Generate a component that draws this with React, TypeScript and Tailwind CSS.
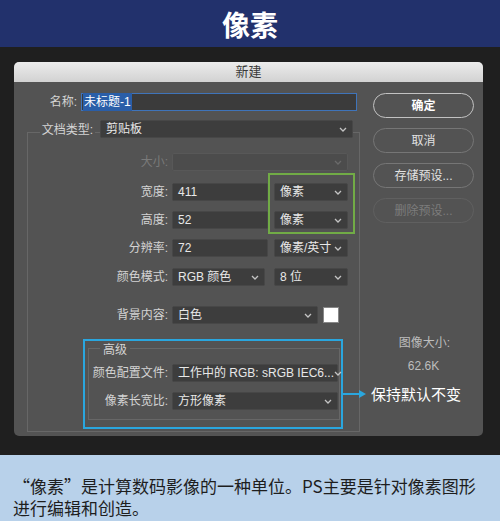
const Chevron = ({ dim = false }: { dim?: boolean }) => (
  <svg width="8" height="5" viewBox="0 0 8 5" className="shrink-0">
    <path d="M1 1l3 3 3-3" fill="none" stroke={dim ? '#6a6a6a' : '#c4c4c4'} strokeWidth="1.3" />
  </svg>
);

type FieldProps = {
  text?: string;
  width: string;
  dim?: boolean;
  chevron?: boolean;
};

const Field = ({ text = '', width, dim = false, chevron = true }: FieldProps) => (
  <div
    className={`flex h-[18px] shrink-0 items-center justify-between rounded-[2px] border px-[5px] text-[12px] ${width} ${
      dim ? 'border-[#585858] bg-[#4c4c4c] text-[#777]' : 'border-[#474747] bg-[#3d3d3d] text-[#e8e8e8]'
    }`}
  >
    <span className="whitespace-nowrap">{text}</span>
    {chevron && <Chevron dim={dim} />}
  </div>
);

const Label = ({ children, width, dim = false }: { children: string; width: string; dim?: boolean }) => (
  <span
    className={`shrink-0 pr-[2px] text-right text-[12px] whitespace-nowrap ${width} ${
      dim ? 'text-[#7a7a7a]' : 'text-[#d4d4d4]'
    }`}
  >
    {children}
  </span>
);

const Pill = ({ children, tone }: { children: string; tone: 'main' | 'normal' | 'off' }) => {
  const look = {
    main: 'border-[#c2c2c2] text-white font-bold',
    normal: 'border-[#767676] text-[#e2e2e2]',
    off: 'border-[#606060] text-[#7c7c7c]',
  }[tone];
  return (
    <div
      className={`flex h-[25px] w-[101px] items-center justify-center rounded-full border-[1.5px] text-[12px] ${look}`}
    >
      {children}
    </div>
  );
};

export default function App() {
  return (
    <div className="h-[521px] w-[500px] font-['Liberation_Sans','Noto_Sans_CJK_SC',sans-serif]">
      <div className="flex h-[47px] items-center justify-center bg-[#22316c]">
        <h1 className="font-['Noto_Sans_CJK_SC',sans-serif] text-[28px] font-bold text-white">像素</h1>
      </div>

      <div className="h-[408px] bg-[#1f1f1f] pt-[15px] pl-[14px]">
        <div className="h-[374px] w-[469px] overflow-hidden rounded-[5px] bg-[#535353]">
          <div className="flex h-[20px] items-center justify-center bg-gradient-to-b from-[#ececec] to-[#d2d2d2] text-[13px] text-[#3a3a3a]">
            新建
          </div>

          <div className="flex">
            {/* form */}
            <div className="w-[351px] shrink-0 pt-[11px]">
              <div className="flex items-center">
                <Label width="w-[65px]">名称:</Label>
                <div className="ml-[2px] flex h-[18px] w-[276px] items-center border-[1.5px] border-[#3f74ba] bg-[#3b3b3b] px-[1px] text-[12px]">
                  <span className="bg-[#2a5ea8] px-[1px] text-white">未标题-1</span>
                </div>
              </div>

              <div className="relative z-10 mt-[6px] flex items-center">
                <div className="w-[81px] shrink-0 text-right">
                  <span className="bg-[#535353] px-[2px] text-[12px] text-[#d4d4d4]">文档类型:</span>
                </div>
                <div className="ml-[5px]">
                  <Field text="剪贴板" width="w-[253px]" />
                </div>
              </div>

              <div className="mt-[-9px] ml-[13px] h-[300px] w-[333px] border border-[#676767] pt-[20px]">
                <div className="flex items-center">
                  <Label width="w-[142px]" dim>
                    大小:
                  </Label>
                  <div className="ml-[2px]">
                    <Field width="w-[176px]" dim />
                  </div>
                </div>

                <div className="relative">
                  <div className="mt-[12px] flex items-center">
                    <Label width="w-[142px]">宽度:</Label>
                    <div className="ml-[2px] flex gap-[6px]">
                      <Field text="411" width="w-[96px]" chevron={false} />
                      <Field text="像素" width="w-[74px]" />
                    </div>
                  </div>
                  <div className="mt-[10px] flex items-center">
                    <Label width="w-[142px]">高度:</Label>
                    <div className="ml-[2px] flex gap-[6px]">
                      <Field text="52" width="w-[96px]" chevron={false} />
                      <Field text="像素" width="w-[74px]" />
                    </div>
                  </div>
                  <div className="absolute top-[-10px] left-[240px] h-[61px] w-[87px] border-2 border-[#71ab46]" />
                </div>

                <div className="mt-[10px] flex items-center">
                  <Label width="w-[142px]">分辨率:</Label>
                  <div className="ml-[2px] flex gap-[6px]">
                    <Field text="72" width="w-[96px]" chevron={false} />
                    <Field text="像素/英寸" width="w-[74px]" />
                  </div>
                </div>

                <div className="mt-[11px] flex items-center">
                  <Label width="w-[142px]">颜色模式:</Label>
                  <div className="ml-[2px] flex gap-[9px]">
                    <Field text="RGB 颜色" width="w-[93px]" />
                    <Field text="8 位" width="w-[74px]" />
                  </div>
                </div>

                <div className="mt-[20px] flex items-center">
                  <Label width="w-[142px]">背景内容:</Label>
                  <div className="ml-[2px] flex items-center gap-[5px]">
                    <Field text="白色" width="w-[146px]" />
                    <div className="h-[16px] w-[16px] border border-[#888] bg-white" />
                  </div>
                </div>

                <div className="relative mt-[15px] ml-[55px] h-[90px] w-[260px] border-2 border-[#2aa6de]">
                  <div className="mt-[7px] ml-[3px] h-[72px] w-[252px] border border-[#676767]">
                    <span className="mt-[-8px] ml-[11px] block w-fit bg-[#535353] px-[3px] text-[12px] text-[#d4d4d4]">
                      高级
                    </span>
                    <div className="mt-[5px] flex items-center">
                      <Label width="w-[81px]">颜色配置文件:</Label>
                      <div className="ml-[2px]">
                        <Field text="工作中的 RGB: sRGB IEC6..." width="w-[166px]" />
                      </div>
                    </div>
                    <div className="mt-[10px] flex items-center">
                      <Label width="w-[81px]">像素长宽比:</Label>
                      <div className="ml-[2px]">
                        <Field text="方形像素" width="w-[166px]" />
                      </div>
                    </div>
                  </div>

                  <div className="absolute top-[42px] left-full z-10 flex items-center">
                    <svg width="26" height="10" viewBox="0 0 26 10">
                      <path d="M0 5h20" stroke="#2aa6de" strokeWidth="2" />
                      <path d="M18 1l7 4-7 4z" fill="#2aa6de" />
                    </svg>
                    <span className="ml-[4px] font-['Noto_Sans_CJK_SC',sans-serif] text-[15px] whitespace-nowrap text-white">
                      保持默认不变
                    </span>
                  </div>
                </div>
              </div>
            </div>

            {/* buttons */}
            <div className="ml-[8px] flex w-[101px] flex-col items-center pt-[11px]">
              <Pill tone="main">确定</Pill>
              <div className="mt-[10px]">
                <Pill tone="normal">取消</Pill>
              </div>
              <div className="mt-[10px]">
                <Pill tone="normal">存储预设...</Pill>
              </div>
              <div className="mt-[10px]">
                <Pill tone="off">删除预设...</Pill>
              </div>
              <p className="mt-[113px] pl-[2px] text-[12px] leading-[14px] text-[#bdbdbd]">图像大小:</p>
              <p className="mt-[9px] text-[12px] leading-[14px] text-[#bdbdbd]">62.6K</p>
            </div>
          </div>
        </div>
      </div>

      <div className="h-[66px] bg-[#b8d1ea] pt-[20px] pl-[13px] font-['Noto_Sans_CJK_SC',sans-serif] text-[17px] leading-[22px] text-[#1e1e1e]">
        <p className="whitespace-nowrap">“像素”是计算数码影像的一种单位。PS主要是针对像素图形</p>
        <p className="whitespace-nowrap">进行编辑和创造。</p>
      </div>
    </div>
  );
}
